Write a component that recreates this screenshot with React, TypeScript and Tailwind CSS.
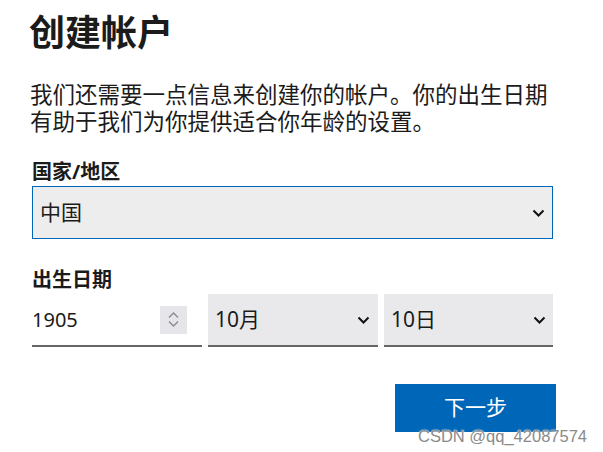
import React from 'react';

function Chevron({ className = '' }: { className?: string }) {
  return (
    <svg width="13" height="8" viewBox="0 0 13 8" className={className} fill="none">
      <path d="M1.5 1.5l5 5 5-5" stroke="#111" strokeWidth="2" />
    </svg>
  );
}

function Spinner() {
  return (
    <div className="w-[27px] h-[28px] bg-[#e6e6ea] flex flex-col items-center justify-center gap-[3px]">
      <svg width="11" height="6" viewBox="0 0 11 6" fill="none">
        <path d="M1 5.5l4.5-4.5 4.5 4.5" stroke="#8a8a8a" strokeWidth="1.3" />
      </svg>
      <svg width="11" height="6" viewBox="0 0 11 6" fill="none">
        <path d="M1 0.5l4.5 4.5 4.5-4.5" stroke="#8a8a8a" strokeWidth="1.3" />
      </svg>
    </div>
  );
}

export default function App() {
  return (
    <div className="relative w-[603px] h-[452px] overflow-hidden bg-white pl-[32px] text-[#1b1b1b] font-['Noto_Sans','Noto_Sans_CJK_SC',sans-serif]">
      <h1 className="mt-[15px] h-[36px] text-[36px] leading-[36px] font-bold -ml-[3px]">创建帐户</h1>

      <p className="mt-[30px] w-[522px] text-[22.5px] leading-[27px] -ml-[2px]">
        我们还需要一点信息来创建你的帐户。你的出生日期有助于我们为你提供适合你年龄的设置。
      </p>

      {/* Country */}
      <div className="mt-[26px] text-[20px] leading-[22px] font-bold">国家/地区</div>
      <div className="mt-[3px] w-[521px] h-[53px] border-[1.5px] border-[#0067b8] bg-[#ededed] flex items-center justify-between pl-[7px] pr-[7px]">
        <span className="text-[21px]">中国</span>
        <Chevron />
      </div>

      {/* Birth date */}
      <div className="mt-[30px] text-[20px] leading-[22px] font-bold">出生日期</div>
      <div className="mt-[3px] flex gap-[6px] h-[53px]">
        <div className="w-[170px] h-full border-b-2 border-[#666] bg-white flex items-center justify-between pr-[15px]">
          <span className="text-[20px]">1905</span>
          <Spinner />
        </div>
        <div className="w-[170px] h-full border-b-2 border-[#666] bg-[#e9e9ec] flex items-center justify-between pl-[7px] pr-[8px]">
          <span className="text-[21px]">10月</span>
          <Chevron />
        </div>
        <div className="w-[169px] h-full border-b-2 border-[#666] bg-[#e9e9ec] flex items-center justify-between pl-[7px] pr-[7px]">
          <span className="text-[21px]">10日</span>
          <Chevron />
        </div>
      </div>

      <div className="mt-[37px] ml-[363px] w-[161px] h-[48px] bg-[#0067b8] flex items-center justify-center text-white text-[21px]">
        下一步
      </div>

      {/* watermark */}
      <div className="absolute left-[418px] top-[424px] text-[16.5px] text-[#8a8a8a] font-['Liberation_Sans',sans-serif] [text-shadow:0_0_2px_#fff,0_0_1px_#fff]">
        CSDN @qq_42087574
      </div>
    </div>
  );
}
